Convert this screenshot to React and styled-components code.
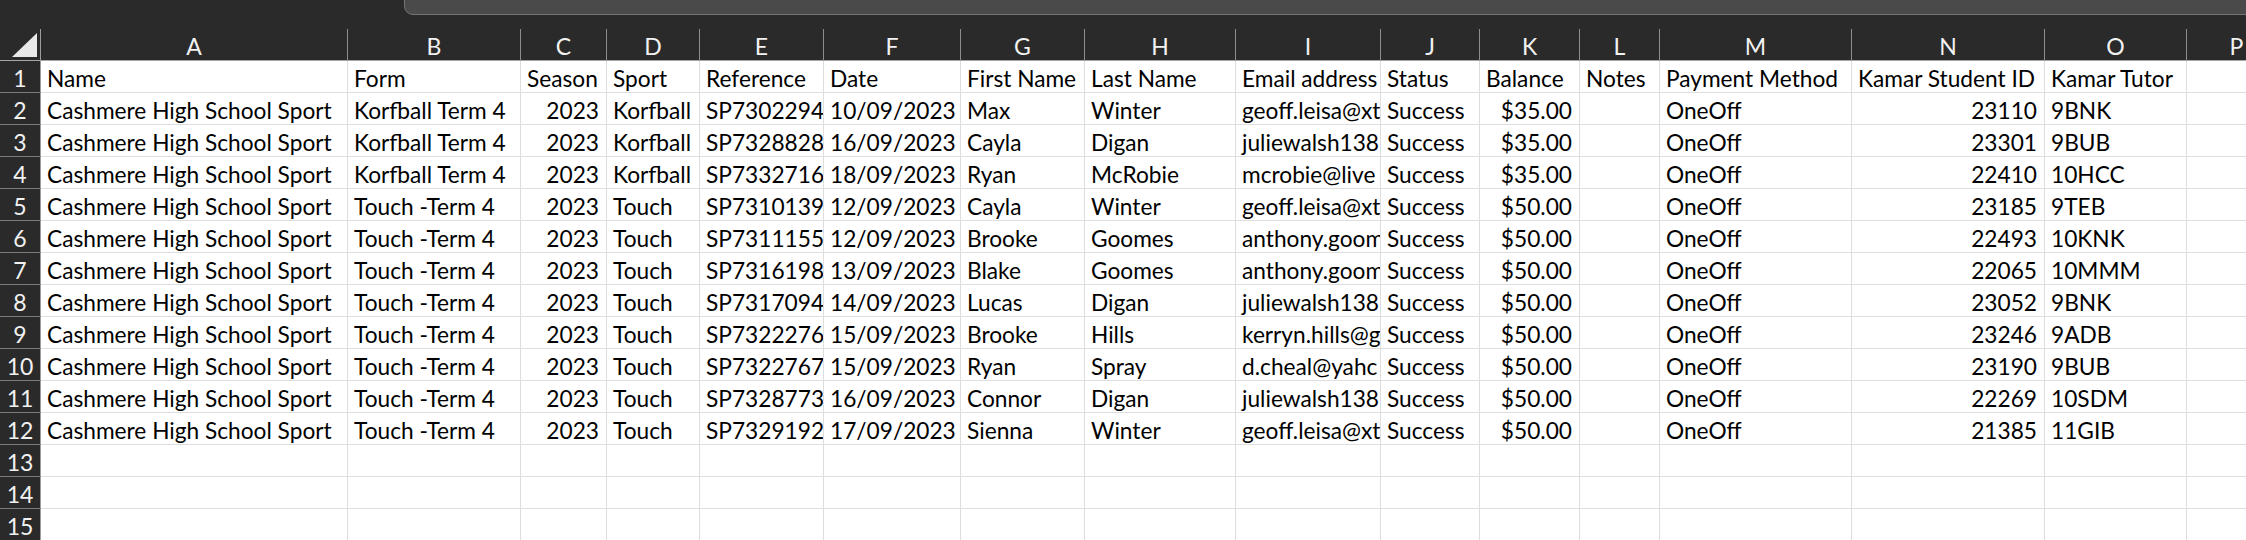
import React from "react";
import styled, { createGlobalStyle } from "styled-components";

const Global = createGlobalStyle`
  html, body { margin: 0; padding: 0; background: #ffffff; }
  body { font-family: "Lato", "Liberation Sans", sans-serif; overflow: hidden; }
`;

const COLS = [
  { key: "A", w: 307 },
  { key: "B", w: 173 },
  { key: "C", w: 86, right: true },
  { key: "D", w: 93 },
  { key: "E", w: 124 },
  { key: "F", w: 137 },
  { key: "G", w: 124 },
  { key: "H", w: 151 },
  { key: "I", w: 145 },
  { key: "J", w: 99 },
  { key: "K", w: 100, right: true },
  { key: "L", w: 80 },
  { key: "M", w: 192 },
  { key: "N", w: 193, right: true },
  { key: "O", w: 142 },
  { key: "P", w: 100 },
];

const TEMPLATE = `41px ${COLS.map((c) => c.w + "px").join(" ")}`;

const HEADER = [
  "Name", "Form", "Season", "Sport", "Reference", "Date", "First Name", "Last Name",
  "Email address", "Status", "Balance", "Notes", "Payment Method", "Kamar Student ID", "Kamar Tutor", "",
];

const mk = (form, sport, ref, date, first, last, email, bal, id, tutor) => [
  "Cashmere High School Sport", form, "2023", sport, ref, date, first, last, email,
  "Success", bal, "", "OneOff", id, tutor, "",
];

const ROWS = [
  mk("Korfball Term 4", "Korfball", "SP7302294_", "10/09/2023", "Max", "Winter", "geoff.leisa@xt", "$35.00", "23110", "9BNK"),
  mk("Korfball Term 4", "Korfball", "SP7328828_", "16/09/2023", "Cayla", "Digan", "juliewalsh138", "$35.00", "23301", "9BUB"),
  mk("Korfball Term 4", "Korfball", "SP7332716_", "18/09/2023", "Ryan", "McRobie", "mcrobie@live", "$35.00", "22410", "10HCC"),
  mk("Touch -Term 4", "Touch", "SP7310139_", "12/09/2023", "Cayla", "Winter", "geoff.leisa@xt", "$50.00", "23185", "9TEB"),
  mk("Touch -Term 4", "Touch", "SP7311155_", "12/09/2023", "Brooke", "Goomes", "anthony.goom", "$50.00", "22493", "10KNK"),
  mk("Touch -Term 4", "Touch", "SP7316198_", "13/09/2023", "Blake", "Goomes", "anthony.goom", "$50.00", "22065", "10MMM"),
  mk("Touch -Term 4", "Touch", "SP7317094_", "14/09/2023", "Lucas", "Digan", "juliewalsh138", "$50.00", "23052", "9BNK"),
  mk("Touch -Term 4", "Touch", "SP7322276_", "15/09/2023", "Brooke", "Hills", "kerryn.hills@g", "$50.00", "23246", "9ADB"),
  mk("Touch -Term 4", "Touch", "SP7322767_", "15/09/2023", "Ryan", "Spray", "d.cheal@yahc", "$50.00", "23190", "9BUB"),
  mk("Touch -Term 4", "Touch", "SP7328773_", "16/09/2023", "Connor", "Digan", "juliewalsh138", "$50.00", "22269", "10SDM"),
  mk("Touch -Term 4", "Touch", "SP7329192_", "17/09/2023", "Sienna", "Winter", "geoff.leisa@xt", "$50.00", "21385", "11GIB"),
];

const EMPTY_ROWS = [13, 14, 15];

const Page = styled.div`
  width: 2246px;
  height: 540px;
  overflow: hidden;
  background: #ffffff;
`;

const TopBar = styled.div`
  height: 29px;
  background: #2a2a2a;
  display: flex;
  justify-content: flex-end;
  align-items: flex-start;
`;

const FormulaBox = styled.div`
  width: 1841px;
  height: 14px;
  margin-right: -1px;
  margin-top: -1px;
  background: #4a4a4a;
  border: 1px solid #767676;
  border-bottom-left-radius: 9px;
`;

const Grid = styled.div`
  display: grid;
  grid-template-columns: ${TEMPLATE};
  grid-auto-rows: 32px;
`;

const Corner = styled.div`
  background: #2a2a2a;
  border-right: 1px solid #9c9c9c;
  border-bottom: 1px solid #a6a6a6;
  box-sizing: border-box;
  display: flex;
  align-items: flex-end;
  justify-content: flex-end;
  padding: 0 3px 3px 0;
`;

const ColHead = styled.div`
  background: #2a2a2a;
  color: #f2f2f2;
  font-size: 23px;
  box-sizing: border-box;
  border-right: 1px solid #8c8c8c;
  border-bottom: 1px solid #a6a6a6;
  display: flex;
  align-items: center;
  justify-content: center;
  padding-top: 2px;
  overflow: hidden;
  white-space: nowrap;
`;

const RowHead = styled.div`
  background: #2a2a2a;
  color: #f2f2f2;
  font-size: 23px;
  box-sizing: border-box;
  border-right: 1px solid #9c9c9c;
  border-bottom: 1px solid #7a7a7a;
  display: flex;
  align-items: center;
  justify-content: center;
  padding-top: 2px;
`;

const Cell = styled.div`
  box-sizing: border-box;
  border-right: 1px solid #dedede;
  border-bottom: 1px solid #dedede;
  color: #000000;
  font-size: 22.7px;
  display: flex;
  align-items: center;
  justify-content: ${(p) => (p.$right ? "flex-end" : "flex-start")};
  padding: 3px ${(p) => (p.$right ? "7px" : "0")} 0 ${(p) => (p.$right ? "0" : "6px")};
  overflow: hidden;
  white-space: nowrap;
`;

function CornerTriangle() {
  return (
    <svg width="25" height="24" viewBox="0 0 25 24">
      <polygon points="25,0 25,24 0,24" fill="#e8e8e8" />
    </svg>
  );
}

export default function App() {
  return (
    <Page>
      <Global />
      <TopBar>
        <FormulaBox />
      </TopBar>
      <Grid>
        <Corner>
          <CornerTriangle />
        </Corner>
        {COLS.map((c) => (
          <ColHead key={c.key}>{c.key}</ColHead>
        ))}

        <RowHead>1</RowHead>
        {HEADER.map((t, i) => (
          <Cell key={"h" + i}>{t}</Cell>
        ))}

        {ROWS.map((r, ri) => (
          <React.Fragment key={ri}>
            <RowHead>{ri + 2}</RowHead>
            {r.map((t, ci) => (
              <Cell key={ci} $right={COLS[ci].right}>
                {t}
              </Cell>
            ))}
          </React.Fragment>
        ))}

        {EMPTY_ROWS.map((n) => (
          <React.Fragment key={n}>
            <RowHead>{n}</RowHead>
            {COLS.map((c) => (
              <Cell key={c.key} />
            ))}
          </React.Fragment>
        ))}
      </Grid>
    </Page>
  );
}
